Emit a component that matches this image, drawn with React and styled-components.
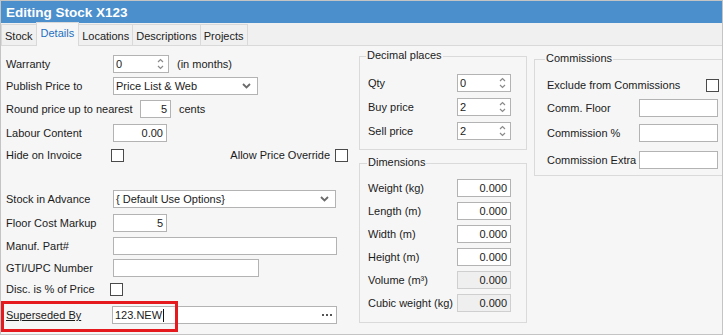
import styled, { createGlobalStyle } from 'styled-components';

const GlobalStyle = createGlobalStyle`
  html, body { margin: 0; padding: 0; background: #ffffff; }
  body { font-family: "Liberation Sans", Arial, sans-serif; font-size: 11px; color: #1b1b1b; }
  * { box-sizing: border-box; }
`;

const Window = styled.div`
  width: 723px;
  height: 335px;
  border: 1px solid #c4c4c4;
  background: #f0f0f0;
  display: flex;
  flex-direction: column;
  overflow: hidden;
`;

const TitleBar = styled.div`
  height: 22px;
  flex: none;
  background: #4b8fcd;
  color: #ffffff;
  font-weight: bold;
  font-size: 13.5px;
  display: flex;
  align-items: center;
  padding-left: 5px;
`;

const TabStrip = styled.div`
  height: 23px;
  flex: none;
  display: flex;
  align-items: flex-end;
  border-bottom: 1px solid #d9d9d9;
  background: #f0f0f0;
`;

const Tab = styled.div`
  height: ${(p) => (p.$active ? '24px' : '21px')};
  margin-bottom: ${(p) => (p.$active ? '-1px' : '0')};
  margin-left: -1px;
  padding: ${(p) => (p.$active ? '0 4px 3px' : '2px 3px 0')};
  border: 1px solid #d9d9d9;
  border-bottom: none;
  background: ${(p) => (p.$active ? '#f6f6f6' : '#f0f0f0')};
  color: ${(p) => (p.$active ? '#1f6fc0' : '#222')};
  display: flex;
  align-items: center;
  position: relative;
  z-index: ${(p) => (p.$active ? 1 : 0)};
  &:first-child { margin-left: 0; }
`;

const Body = styled.div`
  flex: 1;
  display: flex;
  background: #f6f6f6;
  overflow: hidden;
`;

const LeftCol = styled.div`
  width: 358px;
  flex: none;
  padding: 0 11px 0 5px;
  display: flex;
  flex-direction: column;
`;

const MidCol = styled.div`
  width: 168px;
  flex: none;
  display: flex;
  flex-direction: column;
`;

const RightCol = styled.div`
  flex: 1;
  margin-left: 7px;
  margin-right: -3px;
  display: flex;
  flex-direction: column;
`;

const Row = styled.div`
  height: 18px;
  margin-top: ${(p) => p.$mt || 0}px;
  display: flex;
  align-items: center;
  position: relative;
  flex: none;
`;

const Label = styled.span`
  width: ${(p) => p.$w}px;
  flex: none;
  white-space: nowrap;
  text-decoration: ${(p) => (p.$underline ? 'underline' : 'none')};
`;

const Note = styled.span`
  margin-left: 8px;
  white-space: nowrap;
`;

const Field = styled.div`
  width: ${(p) => p.$w}px;
  height: 18px;
  flex: none;
  border: 1px solid ${(p) => (p.$disabled ? '#cfcfcf' : '#b3b3b3')};
  background: ${(p) => (p.$disabled ? '#efefef' : '#ffffff')};
  display: flex;
  align-items: center;
  justify-content: ${(p) => (p.$right ? 'flex-end' : 'flex-start')};
  padding: 0 3px 0 2px;
  position: relative;
  white-space: nowrap;
  overflow: hidden;
`;

const Box = styled.div`
  width: 13px;
  height: 13px;
  flex: none;
  border: 1px solid #4a4a4a;
  background: #ffffff;
`;

const Pushed = styled.div`
  margin-left: auto;
  display: flex;
  align-items: center;
  gap: 5px;
`;

const Group = styled.div`
  position: relative;
  border: 1px solid #dadada;
  margin-top: ${(p) => p.$mt}px;
  padding: ${(p) => p.$pt}px 14px ${(p) => p.$pb}px ${(p) => p.$pl || 8}px;
  display: flex;
  flex-direction: column;
`;

const Caption = styled.span`
  position: absolute;
  top: -8px;
  left: ${(p) => p.$left}px;
  padding: 0 1px;
  background: #f6f6f6;
  white-space: nowrap;
`;

const Annotation = styled.div`
  position: absolute;
  left: -5px;
  top: -5px;
  width: 177px;
  height: 31px;
  border: 3px solid #e51a1f;
  pointer-events: none;
`;

const Caret = styled.span`
  display: inline-block;
  width: 1px;
  height: 13px;
  background: #111;
  margin-left: 1px;
`;

const Dots = styled.span`
  position: absolute;
  right: 4px;
  top: 0;
  bottom: 0;
  display: flex;
  align-items: center;
  gap: 2px;
`;

const Dot = styled.i`
  width: 2px;
  height: 2px;
  background: #555;
`;

const IconSlot = styled.span`
  position: absolute;
  right: ${(p) => p.$r}px;
  top: 0;
  bottom: 0;
  display: flex;
  align-items: center;
`;

function Spin() {
  return (
    <IconSlot $r={4}>
      <svg width="7" height="12" viewBox="0 0 7 12">
        <polyline points="1,4 3.5,1.5 6,4" fill="none" stroke="#8a8a8a" strokeWidth="1.2" />
        <polyline points="1,8 3.5,10.5 6,8" fill="none" stroke="#8a8a8a" strokeWidth="1.2" />
      </svg>
    </IconSlot>
  );
}

function Chevron() {
  return (
    <IconSlot $r={6}>
      <svg width="9" height="6" viewBox="0 0 9 6">
        <polyline points="1,1 4.5,4.5 8,1" fill="none" stroke="#6b6b6b" strokeWidth="1.8" />
      </svg>
    </IconSlot>
  );
}

const tabs = ['Stock', 'Details', 'Locations', 'Descriptions', 'Projects'];

const decimals = [
  ['Qty', '0'],
  ['Buy price', '2'],
  ['Sell price', '2'],
];

const dims = [
  ['Weight (kg)', false],
  ['Length (m)', false],
  ['Width (m)', false],
  ['Height (m)', false],
  ['Volume (m³)', true],
  ['Cubic weight (kg)', true],
];

export default function App() {
  return (
    <>
      <GlobalStyle />
      <Window>
        <TitleBar>Editing Stock X123</TitleBar>
        <TabStrip>
          {tabs.map((t) => (
            <Tab key={t} $active={t === 'Details'}>{t}</Tab>
          ))}
        </TabStrip>
        <Body>
          <LeftCol>
            <Row $mt={9}>
              <Label $w={107}>Warranty</Label>
              <Field $w={56}>0<Spin /></Field>
              <Note>(in months)</Note>
            </Row>
            <Row $mt={4}>
              <Label $w={107}>Publish Price to</Label>
              <Field $w={145}>Price List &amp; Web<Chevron /></Field>
            </Row>
            <Row $mt={5}>
              <Label $w={134}>Round price up to nearest</Label>
              <Field $w={31} $right>5</Field>
              <Note>cents</Note>
            </Row>
            <Row $mt={6}>
              <Label $w={107}>Labour Content</Label>
              <Field $w={54} $right>0.00</Field>
            </Row>
            <Row $mt={4}>
              <Label $w={105}>Hide on Invoice</Label>
              <Box />
              <Pushed>
                <span>Allow Price Override</span>
                <Box />
              </Pushed>
            </Row>
            <Row $mt={26}>
              <Label $w={107}>Stock in Advance</Label>
              <Field $w={223}>{'{ Default Use Options}'}<Chevron /></Field>
            </Row>
            <Row $mt={6}>
              <Label $w={107}>Floor Cost Markup</Label>
              <Field $w={54} $right>5</Field>
            </Row>
            <Row $mt={5}>
              <Label $w={107}>Manuf. Part#</Label>
              <Field $w={224} />
            </Row>
            <Row $mt={4}>
              <Label $w={107}>GTI/UPC Number</Label>
              <Field $w={146} />
            </Row>
            <Row $mt={3}>
              <Label $w={104}>Disc. is % of Price</Label>
              <Box />
            </Row>
            <Row $mt={8}>
              <Label $w={106} $underline>Superseded By</Label>
              <Field $w={225}>
                123.NEW<Caret />
                <Dots><Dot /><Dot /><Dot /></Dots>
              </Field>
              <Annotation />
            </Row>
          </LeftCol>

          <MidCol>
            <Group $mt={10} $pt={17} $pb={9}>
              <Caption $left={6}>Decimal places</Caption>
              {decimals.map(([l, v], i) => (
                <Row key={l} $mt={i ? 6 : 0}>
                  <Label $w={89}>{l}</Label>
                  <Field $w={54}>{v}<Spin /></Field>
                </Row>
              ))}
            </Group>
            <Group $mt={13} $pt={15} $pb={10}>
              <Caption $left={7}>Dimensions</Caption>
              {dims.map(([l, dis], i) => (
                <Row key={l} $mt={i ? 5 : 0}>
                  <Label $w={89}>{l}</Label>
                  <Field $w={54} $right $disabled={dis}>0.000</Field>
                </Row>
              ))}
            </Group>
          </MidCol>

          <RightCol>
            <Group $mt={13} $pt={16} $pb={6} $pl={12}>
              <Caption $left={10}>Commissions</Caption>
              <Row>
                <Label $w={159}>Exclude from Commissions</Label>
                <Box />
              </Row>
              <Row $mt={5}>
                <Label $w={92}>Comm. Floor</Label>
                <Field $w={79} />
              </Row>
              <Row $mt={7}>
                <Label $w={92}>Commission %</Label>
                <Field $w={79} />
              </Row>
              <Row $mt={9}>
                <Label $w={92}>Commission Extra</Label>
                <Field $w={79} />
              </Row>
            </Group>
          </RightCol>
        </Body>
      </Window>
    </>
  );
}
